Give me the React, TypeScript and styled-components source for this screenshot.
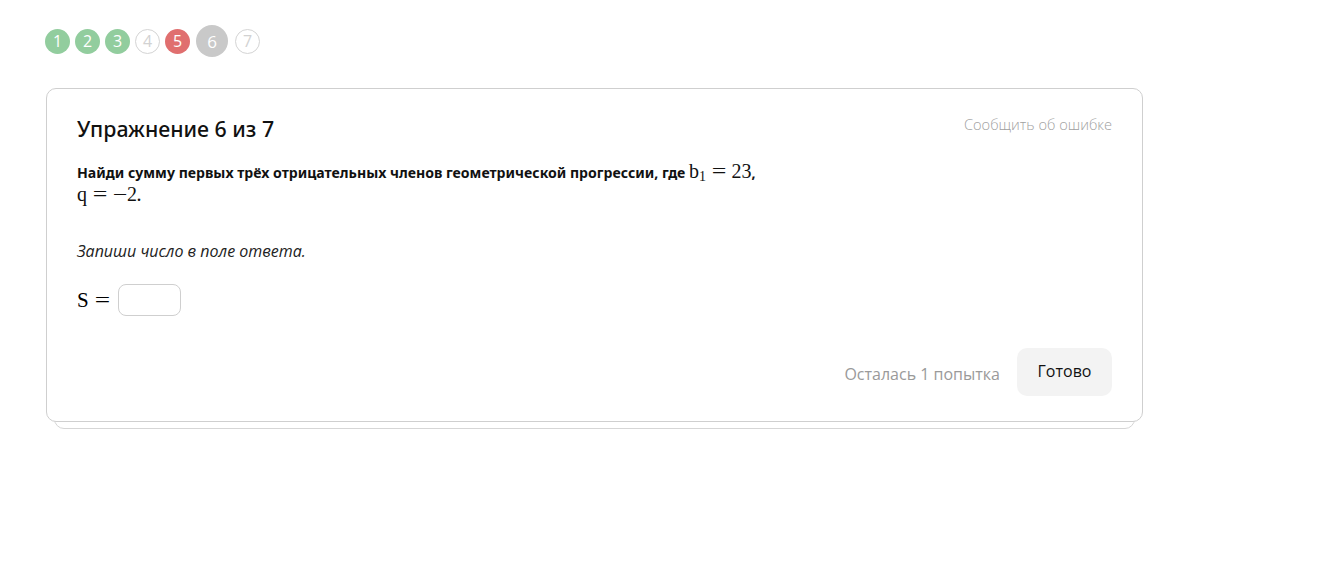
import React from "react";
import styled, { createGlobalStyle } from "styled-components";

const Global = createGlobalStyle`
  body { margin: 0; background: #fff; font-family: "Noto Sans", "Open Sans", sans-serif; color: #000; }
`;

const Page = styled.div`
  padding: 25px 0 0 45px;
  width: 1098px;
`;

const Steps = styled.div`
  display: flex;
  align-items: center;
  gap: 5px;
  height: 32px;
`;

type Kind = "ok" | "todo" | "bad" | "current";

const Step = styled.div<{ $kind: Kind }>`
  box-sizing: border-box;
  width: ${(p) => (p.$kind === "current" ? 32 : 25)}px;
  height: ${(p) => (p.$kind === "current" ? 32 : 25)}px;
  margin: ${(p) => (p.$kind === "current" ? "0 2px 0 1px" : "0")};
  border-radius: 50%;
  display: flex;
  align-items: center;
  justify-content: center;
  font-family: "Open Sans", sans-serif;
  font-size: ${(p) => (p.$kind === "current" ? 17 : 16)}px;
  color: ${(p) => (p.$kind === "todo" ? "#d2d2d2" : "#fff")};
  background: ${(p) =>
    p.$kind === "ok" ? "#92cd9e" : p.$kind === "bad" ? "#e06f6f" : p.$kind === "current" ? "#c9c9c9" : "#fff"};
  border: ${(p) => (p.$kind === "todo" ? "1px solid #d4d4d4" : "none")};
`;

const Stack = styled.div`
  margin-top: 31px;
  margin-left: 1px;
  position: relative;
  padding-bottom: 7px;
`;

const BackCard = styled.div`
  position: absolute;
  left: 8px;
  right: 8px;
  bottom: 0;
  height: 40px;
  border: 1px solid #d6d6d6;
  border-radius: 10px;
  background: #fff;
`;

const Card = styled.div`
  position: relative;
  box-sizing: border-box;
  height: 334px;
  border: 1px solid #cfcfcf;
  border-radius: 10px;
  background: #fff;
  padding: 24px 30px 25px 30px;
  display: flex;
  flex-direction: column;
`;

const Header = styled.div`
  display: flex;
  justify-content: space-between;
  align-items: flex-start;
`;

const Title = styled.h2`
  margin: 0;
  font-family: "Noto Sans", sans-serif;
  font-weight: 500;
  font-size: 21.3px;
  line-height: 32px;
  color: #111;
`;

const Report = styled.a`
  font-family: "Open Sans", sans-serif;
  font-size: 14.6px;
  color: #a0a0a0;
  font-weight: 300;
  margin-top: 1px;
  text-decoration: none;
`;

const Question = styled.p`
  margin: 16px 0 0;
  font-family: "Noto Sans", sans-serif;
  font-weight: 700;
  font-size: 14.1px;
  line-height: 23px;
  color: #111;
`;

const M = styled.span<{ $size?: number }>`
  font-family: "Liberation Serif", "DejaVu Serif", serif;
  font-weight: 400;
  font-size: ${(p) => p.$size ?? 20}px;
  line-height: 1;
`;

const Op = styled.span<{ $rel?: boolean }>`
  display: inline-block;
  width: 0.72em;
  text-align: center;
  transform: scaleX(1.3);
  margin: 0 ${(p) => (p.$rel ? "0.28em" : "0")};
`;

const Sub = styled.sub`
  font-size: 14px;
  line-height: 1;
  vertical-align: -3px;
`;

const Hint = styled.p`
  margin: 33px 0 0;
  font-family: "Open Sans", sans-serif;
  font-style: italic;
  font-size: 16px;
  color: #222;
`;

const AnswerRow = styled.div`
  display: flex;
  align-items: center;
  margin-top: 22px;
`;

const Input = styled.input`
  box-sizing: border-box;
  width: 63px;
  height: 32px;
  border: 1px solid #cfcfcf;
  border-radius: 8px;
  outline: none;
  margin-left: 2px;
`;

const Footer = styled.div`
  margin-top: auto;
  display: flex;
  justify-content: flex-end;
  align-items: center;
  gap: 17px;
`;

const Attempts = styled.span`
  font-family: "Open Sans", sans-serif;
  font-size: 16px;
  color: #9a9a9a;
  margin-top: 4px;
`;

const Button = styled.button`
  border: none;
  background: #f3f3f3;
  border-radius: 10px;
  width: 95px;
  height: 48px;
  font-family: "Open Sans", sans-serif;
  font-size: 16px;
  color: #111;
  padding: 0 0 2px;
`;

export default function App() {
  const steps: Kind[] = ["ok", "ok", "ok", "todo", "bad", "current", "todo"];
  return (
    <>
      <Global />
      <Page>
        <Steps>
          {steps.map((k, i) => (
            <Step key={i} $kind={k}>
              {i + 1}
            </Step>
          ))}
        </Steps>
        <Stack>
          <BackCard />
          <Card>
            <Header>
              <Title>Упражнение 6 из 7</Title>
              <Report>Сообщить об ошибке</Report>
            </Header>
            <Question>
              Найди сумму первых трёх отрицательных членов геометрической прогрессии, где{" "}
              <M>
                b<Sub>1</Sub>
                <Op $rel>=</Op>23
              </M>
              ,
              <br />
              <M>
                q<Op $rel>=</Op>
                <Op>−</Op>2
              </M>
              .
            </Question>
            <Hint>Запиши число в поле ответа.</Hint>
            <AnswerRow>
              <M $size={21}>
                S<Op $rel>=</Op>
              </M>
              <Input />
            </AnswerRow>
            <Footer>
              <Attempts>Осталась 1 попытка</Attempts>
              <Button>Готово</Button>
            </Footer>
          </Card>
        </Stack>
      </Page>
    </>
  );
}
